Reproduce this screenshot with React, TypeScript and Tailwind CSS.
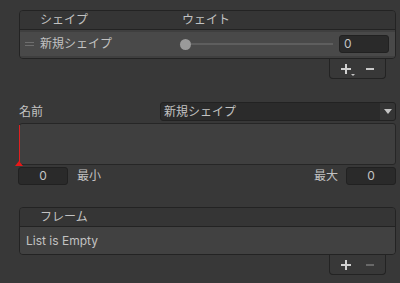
const font = { fontFamily: '"Inter", "Noto Sans CJK JP", sans-serif' };

const Plus = ({ arrow }: { arrow?: boolean }) => (
  <span className="relative w-[10px] h-[10px] flex items-center justify-center">
    <span className="absolute w-[10px] h-[2px] bg-[#d0d0d0]" />
    <span className="absolute w-[2px] h-[10px] bg-[#d0d0d0]" />
    {arrow && (
      <span className="absolute -right-[4px] bottom-[-2px] w-0 h-0 border-l-[2px] border-r-[2px] border-t-[2px] border-l-transparent border-r-transparent border-t-[#c4c4c4]" />
    )}
  </span>
);

const Footer = ({ plusArrow, minusDim }: { plusArrow?: boolean; minusDim?: boolean }) => (
  <div className="self-end mr-[10px] w-[57px] h-[20px] border border-t-0 border-[#232323] rounded-b-[4px] bg-[#383838] flex items-center justify-around px-[4px]">
    <Plus arrow={plusArrow} />
    <span className={`w-[8px] h-[2px] ${minusDim ? "bg-[#686868]" : "bg-[#c8c8c8]"}`} />
  </div>
);

const NumField = ({ center }: { center?: boolean }) => (
  <div
    className={`w-[50px] h-[18px] bg-[#2a2a2a] border border-[#212121] rounded-[3px] flex items-center text-[12px] text-[#c4c4c4] ${
      center ? "justify-center" : "pl-[4px]"
    }`}
  >
    0
  </div>
);

export default function App() {
  return (
    <div style={font} className="w-[400px] h-[283px] bg-[#383838] pt-[10px] text-[12px] text-[#c2c2c2] overflow-hidden">
      {/* shapes list */}
      <div className="flex flex-col w-[377px] ml-[19px]">
        <div className="border border-[#232323] rounded-[4px] overflow-hidden">
          <div className="h-[19px] bg-[#353535] border-b border-[#232323] flex items-center">
            <span className="ml-[20px] w-[142px]">シェイプ</span>
            <span>ウェイト</span>
          </div>
          <div className="bg-[#3f3f3f] py-[2px]">
            <div className="h-[24px] bg-[#494949] flex items-center">
              <div className="ml-[5px] w-[9px] flex flex-col gap-[2px]">
                <span className="h-px bg-[#6e6e6e]" />
                <span className="h-px bg-[#6e6e6e]" />
              </div>
              <span className="ml-[6px] w-[140px]">新規シェイプ</span>
              <div className="flex items-center flex-1">
                <span className="w-[11px] h-[11px] rounded-full bg-[#9a9a9a]" />
                <span className="h-[2px] w-[142px] bg-[#5e5e5e]" />
              </div>
              <div className="mr-[6px]">
                <NumField />
              </div>
            </div>
          </div>
        </div>
        <Footer plusArrow />
      </div>

      {/* name */}
      <div className="mt-[23px] ml-[19px] w-[377px] flex items-center">
        <span className="w-[141px]">名前</span>
        <div className="flex-1 h-[19px] bg-[#2b2b2b] border border-[#222222] rounded-[3px] flex items-center overflow-hidden">
          <span className="flex-1 pl-[3px]">新規シェイプ</span>
          <div className="w-[15px] h-full bg-[#353535] flex items-center justify-center">
            <span className="w-0 h-0 border-l-[4px] border-r-[4px] border-t-[5px] border-l-transparent border-r-transparent border-t-[#c4c4c4]" />
          </div>
        </div>
      </div>

      {/* curve */}
      <div className="relative mt-[2px] ml-[19px] w-[377px] h-[42px]">
        <div className="h-full bg-[#3f3f3f] border border-[#262626] rounded-[3px]" />
        <span className="absolute left-0 top-[2px] bottom-[3px] w-px bg-[#e02020]" />
        <span className="absolute left-[-4px] bottom-[-1px] w-0 h-0 border-l-[4px] border-r-[4px] border-b-[5px] border-l-transparent border-r-transparent border-b-[#e81818]" />
      </div>

      {/* min/max */}
      <div className="mt-[2px] ml-[18px] w-[378px] flex items-center">
        <NumField center />
        <span className="ml-[9px] flex-1">最小</span>
        <span className="mr-[8px]">最大</span>
        <NumField center />
      </div>

      {/* frames */}
      <div className="mt-[22px] flex flex-col w-[377px] ml-[19px]">
        <div className="border border-[#232323] rounded-[4px] overflow-hidden">
          <div className="h-[19px] bg-[#353535] border-b border-[#232323] flex items-center">
            <span className="ml-[20px]">フレーム</span>
          </div>
          <div className="h-[27px] bg-[#414141] flex items-center pl-[6px]">List is Empty</div>
        </div>
        <Footer minusDim />
      </div>
    </div>
  );
}
